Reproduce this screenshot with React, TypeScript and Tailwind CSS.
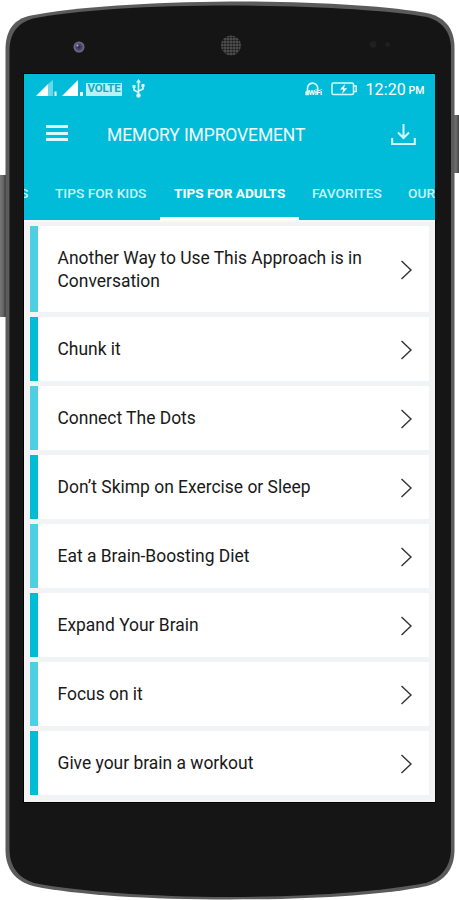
const tips = [
  'Another Way to Use This Approach is in Conversation',
  'Chunk it',
  'Connect The Dots',
  'Don’t Skimp on Exercise or Sleep',
  'Eat a Brain-Boosting Diet',
  'Expand Your Brain',
  'Focus on it',
  'Give your brain a workout',
];

function PhoneBody() {
  return (
    <svg className="absolute inset-0" width="459" height="900" viewBox="0 0 459 900" fill="none" aria-hidden="true">
      <defs>
        <linearGradient id="key" x1="0" x2="1" y1="0" y2="0">
          <stop offset="0" stopColor="#777" />
          <stop offset=".45" stopColor="#666" />
          <stop offset="1" stopColor="#222" />
        </linearGradient>
        <radialGradient id="lens">
          <stop offset="0" stopColor="#28205c" />
          <stop offset=".45" stopColor="#49406f" />
          <stop offset="1" stopColor="#777580" />
        </radialGradient>
        <pattern id="mesh" width="3" height="3" patternUnits="userSpaceOnUse">
          <rect width="3" height="3" fill="#505050" />
          <circle cx="1.5" cy="1.5" r="1.1" fill="#181818" />
        </pattern>
      </defs>
      <rect x="0" y="175" width="7" height="142" fill="url(#key)" />
      <rect x="453" y="115" width="8" height="58" fill="url(#key)" />
      <path
        d="M5.5 48C6 31 13 19 31 15.5C75 7 151 2 230 1.5S390 6 429 13.5C447 18 454.5 31 454.5 48V851C454 869 445 881 427 886C385 895 310 899.5 230 899.5S75 895 33 886C15 881 6 869 5.5 851Z"
        fill="#5b5b5b"
      />
      <path
        d="M9.5 49C10 34 17 23 33 18.5C75 10 151 5.5 230 5.5S390 10 427 17C444 22 451 34 451 49V851C450 866 442 878 426 883C385 891 310 897 230 897S75 891 34 883C18 878 10 866 9.5 851Z"
        fill="#151515"
      />
      <rect x="23" y="73" width="412.5" height="730" fill="#000" />
      <circle cx="79" cy="47" r="5.5" fill="url(#lens)" />
      <circle cx="77.5" cy="45.5" r="1" fill="#b8b0dc" />
      <circle cx="231" cy="45.5" r="10" fill="url(#mesh)" />
      <circle cx="373" cy="44.5" r="3.5" fill="#1f1f1f" />
      <circle cx="387.5" cy="44.5" r="2.5" fill="#1f1f1f" />
    </svg>
  );
}

function StatusBar() {
  return (
    <div className="flex h-[30px] items-center justify-between pl-3 pr-[9px] text-white">
      <div className="flex items-center">
        <svg width="49" height="20" viewBox="0 0 49 20" fill="#fff" aria-hidden="true">
          <path d="M0 17L12 5V17Z" />
          <path d="M12 5L17 1V17H12Z" opacity=".42" />
          <path d="M18.5 12.5h2v4.5h-2zM26 17L42 1V17ZM44 13h3v4h-3z" />
        </svg>
        <span className="ml-px flex h-[13px] w-[36px] items-center justify-center bg-[#b8f2f8] text-[11.5px] leading-none font-bold tracking-[-0.2px] text-[#16aabd]">
          VOLTE
        </span>
        <svg className="ml-[10px]" width="13" height="20" viewBox="0 0 13 20" fill="none" stroke="#d8f9fc" strokeWidth="1.7" aria-hidden="true">
          <path d="M6.5 2v15M2 7v4l4.5 2.5M11 6v4l-4.5 2" />
          <path d="M6.5 0L9 3.5H4ZM.5 6h3v3H.5zM9.5 5h3v3h-3z" fill="#d8f9fc" stroke="none" />
          <circle cx="6.5" cy="16.5" r="2.2" fill="#d8f9fc" stroke="none" />
        </svg>
      </div>
      <div className="flex items-center">
        <span className="relative h-[15px] w-[19px]">
          <svg className="absolute inset-0" width="19" height="15" viewBox="0 0 19 15" fill="none" stroke="#e2fbfd" strokeWidth="1.6" aria-hidden="true">
            <path d="M2.5 9V6.5a5 5 0 0 1 10.2-.5V8" />
            <path d="M2.5 8L.7 9.8V13h3.1V9Z" fill="#e2fbfd" strokeWidth=".5" />
          </svg>
          <span className="absolute left-[4px] top-[7px] text-[7.5px] leading-[7px] font-bold tracking-[-0.4px]">WiFi</span>
        </span>
        <svg className="ml-[7px]" width="27" height="14" viewBox="0 0 27 14" fill="none" stroke="#d9fafd" strokeWidth="1.5" aria-hidden="true">
          <rect x="1" y="1" width="21.5" height="11.5" rx="1.5" />
          <path d="M23 4h2.2v5.5H23" />
          <path d="M14 2L9 7.5h3.2L11 12L16.2 6.2h-3.2Z" fill="#fff" stroke="none" />
        </svg>
        <span className="ml-[8px] mt-px w-[41px] text-[16px] leading-5 tracking-[0.1px] whitespace-nowrap">12:20</span>
        <span className="ml-[2px] mt-[3px] w-[17px] text-[10.5px] leading-5 font-medium">PM</span>
      </div>
    </div>
  );
}

function AppBar() {
  return (
    <div className="flex h-[60px] items-center pl-[22px] pr-[19px]">
      <button aria-label="Menu" className="-mt-[2px] flex w-[22px] flex-col gap-[3.5px]">
        <span className="h-[3px] bg-[#d9fafd]" />
        <span className="h-[3px] bg-[#d9fafd]" />
        <span className="h-[3px] bg-[#d9fafd]" />
      </button>
      <h1 className="ml-[39px] mt-[2px] flex-1 text-[17.5px] tracking-[-0.12px] whitespace-nowrap text-[#effdff]">MEMORY IMPROVEMENT</h1>
      <button aria-label="Download" className="mt-px">
        <svg width="25" height="23" viewBox="0 0 25 23" fill="none" stroke="#d9fafd" strokeWidth="2" aria-hidden="true">
          <path d="M12.5 1v13.5M7 9.5l5.5 5.5L18 9.5M1.2 15v6h22.6v-6" />
        </svg>
      </button>
    </div>
  );
}

function Tabs() {
  return (
    <nav className="flex h-[56px] overflow-hidden text-[13.7px] leading-[59px] font-medium whitespace-nowrap text-[#c9f3f8]">
      <span className="w-[18px] shrink-0 -indent-[4px]">S</span>
      <span className="w-[118px] shrink-0 pl-[13px]">TIPS FOR KIDS</span>
      <span className="w-[139px] shrink-0 border-b-[3px] border-white pl-[14px] text-[13.6px] font-bold text-white">TIPS FOR ADULTS</span>
      <span className="w-[96px] shrink-0 pl-[13px]">FAVORITES</span>
      <span className="shrink-0 pl-[13px]">OUR APPS</span>
    </nav>
  );
}

function TipRow({ title, odd }: { title: string; odd: boolean }) {
  return (
    <li className="flex min-h-[63.5px] items-center bg-white pr-[16px]">
      <span className={`w-[8px] shrink-0 self-stretch ${odd ? 'bg-[#00bcd4]' : 'bg-[#4dd0e1]'}`} />
      <span className="ml-[19.5px] flex-1 pt-[21px] pb-[19px] text-[17.45px] leading-[23px] text-[#191919]">{title}</span>
      <svg className="-ml-4 mt-[3px]" width="13" height="20" viewBox="0 0 13 20" fill="none" stroke="#333" strokeWidth="1.4" aria-hidden="true">
        <path d="M1.5 1L11 10L1.5 19" />
      </svg>
    </li>
  );
}

export default function App() {
  return (
    <main className="relative h-[900px] w-[459px] overflow-hidden bg-white pl-[24px] pt-[74px] font-['Roboto',sans-serif]">
      <PhoneBody />
      <div className="relative flex h-[728px] w-[410.5px] flex-col overflow-hidden bg-[#f1f3f4]">
        <header className="h-[146px] shrink-0 bg-[#00bcd9]">
          <StatusBar />
          <AppBar />
          <Tabs />
        </header>
        <ul className="flex flex-col gap-[5.5px] border-t-2 border-[#f8fafa] pl-[6px] pr-[6px] pt-[3.5px]">
          {tips.map((tip, i) => (
            <TipRow key={tip} title={tip} odd={i % 2 === 1} />
          ))}
        </ul>
      </div>
    </main>
  );
}
